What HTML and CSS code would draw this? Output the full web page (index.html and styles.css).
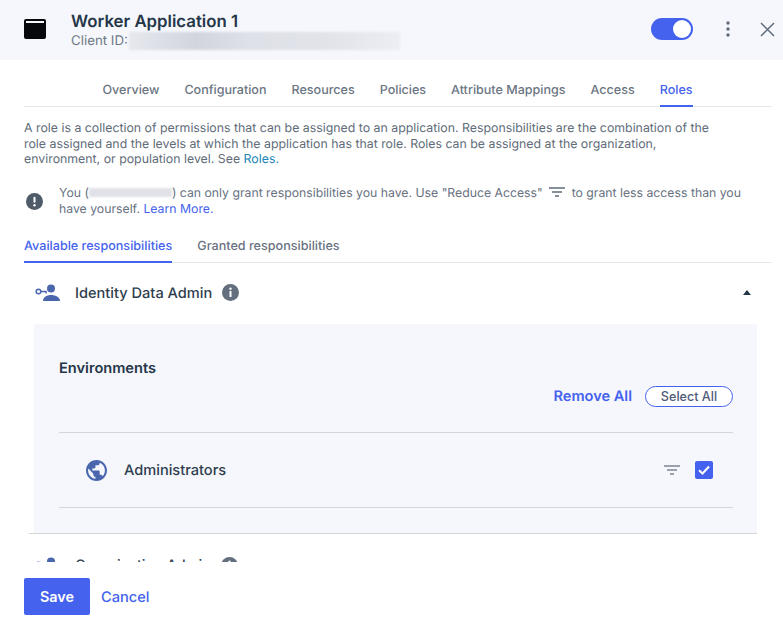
FILE: index.html
```html
<!DOCTYPE html>
<html lang="en">
<head>
<meta charset="utf-8">
<title>Worker Application 1</title>
<link rel="stylesheet" href="styles.css">
</head>
<body>
<header class="header">
  <svg class="app-icon" width="22" height="22" viewBox="0 0 22 22"><path d="M2 1h18a2 2 0 0 1 2 2v16a2 2 0 0 1-2 2H2a2 2 0 0 1-2-2V3a2 2 0 0 1 2-2z" fill="#06080c"/><rect x="2" y="3" width="18" height="2" fill="#f5f7fc"/></svg>
  <div class="titles">
    <div class="title">Worker Application 1</div>
    <div class="client"><span>Client ID:</span><span class="redact-wide"></span></div>
  </div>
  <span class="toggle"><span class="knob"></span></span>
  <svg class="kebab" width="4" height="16" viewBox="0 0 4 16"><circle cx="2" cy="2" r="1.7" fill="#5f6b7a"/><circle cx="2" cy="8" r="1.7" fill="#5f6b7a"/><circle cx="2" cy="14" r="1.7" fill="#5f6b7a"/></svg>
  <svg class="close" width="15" height="15" viewBox="0 0 15 15"><path d="M1 1l13 13M14 1L1 14" stroke="#5f6b7a" stroke-width="1.5" fill="none"/></svg>
</header>
<main class="content">
  <nav class="tabs">
    <span class="tab">Overview</span>
    <span class="tab">Configuration</span>
    <span class="tab">Resources</span>
    <span class="tab">Policies</span>
    <span class="tab">Attribute Mappings</span>
    <span class="tab">Access</span>
    <span class="tab active">Roles</span>
  </nav>
  <p class="intro">A role is a collection of permissions that can be assigned to an application. Responsibilities are the combination of the role assigned and the levels at which the application has that role. Roles can be assigned at the organization, environment, or population level. See <a class="teal">Roles.</a></p>
  <div class="notice">
    <svg class="notice-icon" width="17" height="17" viewBox="0 0 17 17"><circle cx="8.5" cy="8.5" r="8.5" fill="#4f5b68"/><rect x="7.5" y="3.8" width="2" height="6" rx="1" fill="#fff"/><circle cx="8.5" cy="12.2" r="1.2" fill="#fff"/></svg>
    <p class="notice-text">You (<span class="redact-small"></span>) can only grant responsibilities you have. Use "Reduce Access" <svg class="inline-filter" width="16" height="10" viewBox="0 0 16 10"><path d="M0 1h16M3 5h10M6 9h4" stroke="#5f6b7a" stroke-width="1.4" fill="none"/></svg> to grant less access than you have yourself. <a class="link">Learn More.</a></p>
  </div>
  <nav class="subtabs">
    <span class="subtab active">Available responsibilities</span>
    <span class="subtab">Granted responsibilities</span>
  </nav>
  <div class="scroll">
    <section class="role-head">
      <svg class="role-icon" width="26" height="18" viewBox="0 0 26 18"><circle cx="16" cy="4.5" r="4" fill="#4a66ad"/><path d="M8 17c0-4 4-6 8-6s9 2 9 6z" fill="#4a66ad"/><circle cx="3.5" cy="7.5" r="2.3" fill="none" stroke="#4a66ad" stroke-width="1.5"/><path d="M6 7.5h5v2" fill="none" stroke="#4a66ad" stroke-width="1.5"/></svg>
      <span class="role-name">Identity Data Admin</span>
      <svg class="info" width="17" height="17" viewBox="0 0 17 17"><circle cx="8.5" cy="8.5" r="8.5" fill="#636f7e"/><rect x="7.5" y="7" width="2" height="6" rx=".6" fill="#fff"/><circle cx="8.5" cy="4.8" r="1.2" fill="#fff"/></svg>
      <span class="caret"></span>
    </section>
    <section class="panel">
      <h2 class="panel-title">Environments</h2>
      <div class="panel-actions">
        <a class="remove">Remove All</a>
        <button class="select">Select All</button>
      </div>
      <div class="env-row">
        <svg class="globe" width="21" height="21" viewBox="2 2 20 20"><path fill="#4a66ad" d="M12 2C6.480 2 2 6.480 2 12s4.480 10 10 10 10-4.480 10-10S17.520 2 12 2zm-1 17.930c-3.950-.49-7-3.850-7-7.930 0-.62.08-1.210.21-1.790L9 15v1c0 1.100.9 2 2 2v1.930zm6.900-2.540c-.26-.81-1-1.390-1.900-1.390h-1v-3c0-.55-.45-1-1-1H8v-2h2c.55 0 1-.45 1-1V7h2c1.100 0 2-.9 2-2v-.41c2.930 1.190 5 4.060 5 7.410 0 2.080-.8 3.970-2.100 5.390z"/></svg>
        <span class="env-name">Administrators</span>
        <svg class="row-filter" width="16" height="10" viewBox="0 0 16 10"><path d="M0 1h16M3 5h10M6 9h4" stroke="#7b8591" stroke-width="1.4" fill="none"/></svg>
        <span class="checkbox"><svg width="12" height="10" viewBox="0 0 12 10"><path d="M1 5.200l3.500 3.300L11 1.500" stroke="#fff" stroke-width="2" fill="none"/></svg></span>
      </div>
    </section>
    <section class="role-head next">
      <svg class="role-icon" width="26" height="18" viewBox="0 0 26 18"><circle cx="16" cy="4.500" r="4" fill="#4a66ad"/><path d="M8 17c0-4 4-6 8-6s9 2 9 6z" fill="#4a66ad"/><circle cx="3.500" cy="7.500" r="2.300" fill="none" stroke="#4a66ad" stroke-width="1.500"/><path d="M6 7.500h5v2" fill="none" stroke="#4a66ad" stroke-width="1.500"/></svg>
      <span class="role-name">Organization Admin</span>
      <svg class="info" width="17" height="17" viewBox="0 0 17 17"><circle cx="8.500" cy="8.500" r="8.500" fill="#636f7e"/><rect x="7.500" y="7" width="2" height="6" rx=".6" fill="#fff"/><circle cx="8.500" cy="4.800" r="1.200" fill="#fff"/></svg>
    </section>
  </div>
  <footer class="footer">
    <button class="save">Save</button>
    <a class="cancel">Cancel</a>
  </footer>
</main>
</body>
</html>
```
FILE: styles.css
```css
* { box-sizing: border-box; }
html, body { margin: 0; height: 100%; overflow: hidden; }
body { background: #fff; font-family: Inter, "Liberation Sans", sans-serif; color: #68727f; width: 783px; height: 637px; text-rendering: geometricPrecision; }
p { margin: 0; }

.header { height: 60px; background: #f5f7fc; display: flex; align-items: center; padding: 0 8px 0 24px; }
.app-icon { flex: none; margin-top: -2px; }
.titles { margin-left: 25px; flex: 1; margin-top: 1px; }
.title { font-size: 16.8px; font-weight: 600; color: #253648; line-height: 20px; }
.client { font-size: 13.3px; line-height: 16px; color: #6f7985; display: flex; align-items: center; }
.redact-wide { width: 271px; height: 18px; background: linear-gradient(90deg, #e6e8ee, #d2d5de 25%, #dfe1e8 45%, #e2e4ea 75%, #edeef3); display: block; margin-left: 1px; filter: blur(1px); }
.toggle { width: 42px; height: 22px; border-radius: 11px; background: #4462ed; display: flex; align-items: center; justify-content: flex-end; padding: 0 2px; margin-top: -2px; }
.knob { width: 18px; height: 18px; border-radius: 50%; background: #fff; }
.kebab { margin-left: 33px; margin-top: -2px; }
.close { margin-left: 30px; margin-top: -2px; }

.content { padding: 0 11px 0 24px; }
.tabs { display: flex; justify-content: center; gap: 25px; height: 47px; border-bottom: 1px solid #e6e8ec; padding-right: 1px; }
.tab { font-size: 12.55px; font-weight: 500; color: #6b7582; line-height: 61px; height: 46px; white-space: nowrap; }
.tab.active { color: #4462ed; border-bottom: 2px solid #4462ed; height: 47px; }

.intro { font-size: 12.33px; line-height: 15.5px; color: #616c79; margin-top: 13px; width: 700px; }
.teal { color: #1b86b8; }

.notice { display: flex; align-items: center; margin-top: 18px; }
.notice-icon { flex: none; margin-left: 2px; margin-top: 1px; }
.notice-text { font-size: 12.25px; line-height: 16px; color: #68727f; margin-left: 16px; width: 700px; }
.redact-small { display: inline-block; width: 83px; height: 9px; background: #e0e2e8; filter: blur(1px); }
.inline-filter { margin: 0 3px; }
.link { color: #4462ed; }

.subtabs { display: flex; gap: 25px; height: 33px; margin-top: 13.5px; border-bottom: 1px solid #e6e8ec; }
.subtab { font-size: 12.6px; font-weight: 500; color: #68727f; line-height: 33px; height: 32px; }
.subtab.active { color: #4462ed; border-bottom: 2px solid #4462ed; height: 33px; }

.scroll { height: 299px; overflow: hidden; }
.role-head { display: flex; align-items: center; height: 61px; padding: 0 21px 2px 11px; }
.role-icon { flex: none; }
.role-name { font-size: 14.6px; font-weight: 500; color: #2f3e4e; margin-left: 14px; }
.info { margin-left: 10px; }
.caret { margin-left: auto; border: 4.5px solid transparent; border-top: 0; border-bottom: 5px solid #253648; }

.panel { margin-left: 10px; width: 723px; height: 209px; background: #f5f7fc; padding: 34px 24px 0 25px; position: relative; }
.panel::after { content: ""; position: absolute; left: -5px; right: 0; bottom: -1px; height: 1px; background: #d4d6da; }
.panel-title { margin: 0; font-size: 14.6px; font-weight: 600; color: #253648; line-height: 20px; }
.panel-actions { display: flex; justify-content: flex-end; align-items: center; gap: 13px; height: 47px; padding-bottom: 26px; margin-top: 8px; border-bottom: 1px solid #d4d6da; }
.remove { font-size: 14.6px; font-weight: 600; color: #4462ed; }
.select { width: 88px; height: 21px; border: 1px solid #4462ed; border-radius: 11px; background: #fff; color: #4f5b78; font: 500 12.6px Inter, "Liberation Sans", sans-serif; padding: 0; flex: none; }
.env-row { display: flex; align-items: center; height: 75px; border-bottom: 1px solid #d4d6da; padding: 0 20px 0 27px; }
.env-name { font-size: 14.6px; font-weight: 500; color: #2f3e4e; margin-left: 17px; flex: 1; }
.row-filter { margin-right: 15px; }
.checkbox { width: 18px; height: 18px; border-radius: 2px; background: #4462ed; display: flex; align-items: center; justify-content: center; }

.role-head.next { margin-top: 23.5px; height: 18px; padding-bottom: 0; }
.role-head.next .role-name { font-size: 14.4px; }

.footer { display: flex; align-items: center; gap: 11px; margin-top: 16px; }
.save { width: 66px; height: 37px; border: 0; border-radius: 2px; background: #4462ed; color: #fff; font: 600 14.4px Inter, "Liberation Sans", sans-serif; padding: 0; }
.cancel { font-size: 14.6px; font-weight: 500; color: #4462ed; }
```
